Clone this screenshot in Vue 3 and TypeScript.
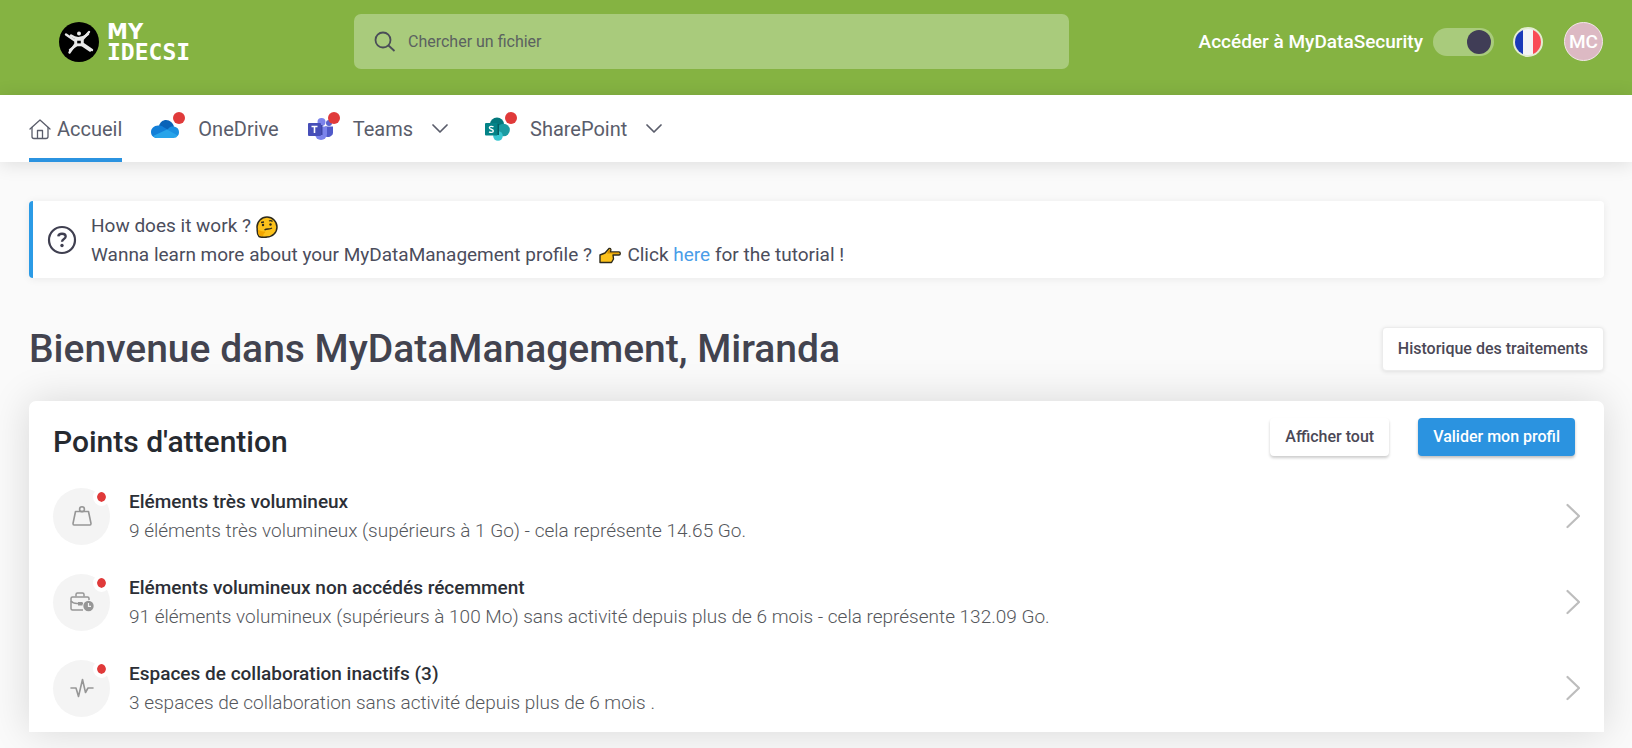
<script setup lang="ts">
import { ref } from 'vue'

interface Attention {
  icon: 'weight' | 'briefcase' | 'pulse'
  title: string
  text: string
}

const search = ref('')
const security = ref(true)

const points: Attention[] = [
  {
    icon: 'weight',
    title: 'Eléments très volumineux',
    text: '9 éléments très volumineux (supérieurs à 1 Go) - cela représente 14.65 Go.',
  },
  {
    icon: 'briefcase',
    title: 'Eléments volumineux non accédés récemment',
    text: '91 éléments volumineux (supérieurs à 100 Mo) sans activité depuis plus de 6 mois - cela représente 132.09 Go.',
  },
  {
    icon: 'pulse',
    title: 'Espaces de collaboration inactifs (3)',
    text: '3 espaces de collaboration sans activité depuis plus de 6 mois .',
  },
]
</script>

<template>
  <div class="page">
    <header class="topbar">
      <a class="logo" href="#">
        <svg width="42" height="42" viewBox="0 0 42 42" aria-hidden="true">
          <circle cx="21" cy="21" r="20" fill="#000" />
          <g fill="none" stroke="#e8e8e8" stroke-width="2.4" stroke-linecap="round" stroke-linejoin="round">
            <path d="M8 13.500 L17.500 20 V23 L11.500 31.500" />
            <path d="M31 11 L24.500 18.500 V22.500 L34 29" />
            <path d="M13 14.500 Q21 20.500 30 13" />
            <path d="M12 29 L19 23.800 H23.500 L32 29.500" />
            <path d="M18 18.500 H24 V24 H18 Z" />
          </g>
          <circle cx="21" cy="12.500" r="2" fill="#e8e8e8" />
        </svg>
        <span class="brand"><span class="brand-my">MY</span><span class="brand-name">IDECSI</span></span>
      </a>

      <div class="search">
        <label for="search" class="search-icon">
          <svg width="22" height="22" viewBox="0 0 22 22" role="img" aria-label="Rechercher">
            <circle cx="9" cy="9" r="7.5" fill="none" stroke="#4a4d58" stroke-width="1.8" />
            <path d="M14.5 14.5 L20.5 20" stroke="#4a4d58" stroke-width="1.8" fill="none" />
          </svg>
        </label>
        <input id="search" v-model="search" type="text" placeholder="Chercher un fichier" />
      </div>

      <div class="account">
        <label for="security">Accéder à MyDataSecurity</label>
        <input id="security" v-model="security" class="switch" type="checkbox" role="switch" />
        <button class="round flag" type="button" aria-label="Français">
          <svg width="30" height="30" viewBox="0 0 30 30">
            <clipPath id="flag-clip"><circle cx="15" cy="15" r="13" /></clipPath>
            <circle cx="15" cy="15" r="15" fill="#e3edd2" />
            <g clip-path="url(#flag-clip)">
              <rect width="30" height="30" fill="#f3f3f5" />
              <rect width="10" height="30" fill="#1a39b8" />
              <rect x="20" width="10" height="30" fill="#f94b55" />
            </g>
          </svg>
        </button>
        <button class="round avatar" type="button">MC</button>
      </div>
    </header>

    <nav class="tabs">
      <a class="tab active" href="#">
        <svg width="22" height="22" viewBox="0 0 22 22" fill="none" stroke="#5a5d6b" stroke-width="1.3" stroke-linejoin="round" stroke-linecap="round" aria-hidden="true">
          <path d="M1 11 L11 2 L21 11" />
          <path d="M3 9.5 V18.5 Q3 20.5 5 20.5 H17 Q19 20.5 19 18.5 V9.5" />
          <path d="M8.5 20 V12.5 H13.5 V20" />
        </svg>
        <span>Accueil</span>
      </a>

      <a class="tab app" href="#">
        <span class="app-icon">
          <svg width="28" height="20" viewBox="0 0 28 20" aria-hidden="true">
            <path d="M8 7 C9 3 12 1 15 1 C19 1 22 4 23 7.500 L16 13 Z" fill="#0a63b8" />
            <path d="M7 6.500 C10 6 12 7.500 14 9 L19 12 L6 19 C2.500 19 0 16.500 0 13 C0 9.500 3 6.600 7 6.500 Z" fill="#127fd8" />
            <path d="M17 10 C19 7.500 21 7.200 23 7.500 C26 8 28 10 28 13 C28 15 27.500 16 26.500 17 L15 12 Z" fill="#1a8fe0" />
            <path d="M2 17 L16 10.500 L26.800 16.500 C26 18.200 24.500 19 22.500 19 H6 C4.500 19 3 18.300 2 17 Z" fill="#28a4ea" />
          </svg>
          <i class="alert-dot"></i>
        </span>
        <span>OneDrive</span>
      </a>

      <button class="tab app" type="button">
        <span class="app-icon">
          <svg width="26" height="24" viewBox="0 0 26 24" aria-hidden="true">
            <circle cx="21" cy="6" r="3" fill="#5a62cc" />
            <circle cx="13.500" cy="5" r="4" fill="#7b83eb" />
            <path d="M17 9.500 H25 V16 A5 5 0 0 1 17 19 Z" fill="#5059c9" />
            <path d="M7 9.500 H19 V17 A6 6 0 0 1 7 17 Z" fill="#7b83eb" />
            <path d="M8 8 H14.500 V18 H8 Z" fill="#3e46a8" />
            <rect x="0" y="6" width="13" height="13" rx="1" fill="#464eb8" />
            <path d="M3.500 9.500 H9.500 M6.500 9.500 V16" stroke="#fff" stroke-width="1.600" />
          </svg>
          <i class="alert-dot"></i>
        </span>
        <span>Teams</span>
        <svg class="caret" width="16" height="10" viewBox="0 0 16 10" aria-hidden="true">
          <path d="M1 1 L8 8 L15 1" fill="none" stroke="#5a5d6b" stroke-width="1.700" stroke-linecap="round" stroke-linejoin="round" />
        </svg>
      </button>

      <button class="tab app wide" type="button">
        <span class="app-icon">
          <svg width="26" height="24" viewBox="0 0 26 24" aria-hidden="true">
            <circle cx="12" cy="7.500" r="7" fill="#03787c" />
            <circle cx="18.500" cy="13" r="6.300" fill="#1a9ba1" />
            <circle cx="13" cy="19" r="4.800" fill="#37c6d0" />
            <path d="M2 7 H14 V18 H6 Z" fill="#045d61" />
            <rect x="0" y="6" width="12.500" height="12.500" rx="1" fill="#038387" />
            <path d="M8.500 9.900 C7 9 4.300 9.200 4.400 10.800 C4.500 12.500 8.400 12 8.300 14 C8.200 15.700 5.500 15.700 4.100 14.800" fill="none" stroke="#fff" stroke-width="1.400" />
          </svg>
          <i class="alert-dot"></i>
        </span>
        <span>SharePoint</span>
        <svg class="caret" width="16" height="10" viewBox="0 0 16 10" aria-hidden="true">
          <path d="M1 1 L8 8 L15 1" fill="none" stroke="#5a5d6b" stroke-width="1.700" stroke-linecap="round" stroke-linejoin="round" />
        </svg>
      </button>
    </nav>

    <main class="content">
      <section class="notice">
        <svg width="30" height="30" viewBox="0 0 30 30" aria-hidden="true">
          <circle cx="15" cy="15" r="13" fill="none" stroke="#3f3f50" stroke-width="2.200" />
          <path d="M11.300 11.300 C11.600 7.800 18.700 7.900 18.700 11.500 C18.700 14.200 15 13.800 15 16.800" fill="none" stroke="#3f3f50" stroke-width="2.300" />
          <circle cx="15" cy="20.500" r="1.700" fill="#3f3f50" />
        </svg>
        <div>
          <p>
            How does it work ?
            <svg class="emoji" width="22" height="22" viewBox="0 0 22 22" role="img" aria-label="Visage pensif">
              <path d="M3 20.500 C1.500 19 1 16.500 1.200 13 L1 11 A10 10 0 1 1 11 21 C8 21.500 5 21.500 3 20.500 Z" fill="#fcc21b" stroke="#2d2a1c" stroke-width="1.500" />
              <path d="M2 14 C4 14 5 16 9 15.500 C10 16.500 8 17.500 7.500 18 C8 20 6 20.500 4 20 C2.500 19 2 17 2 14 Z" fill="#f2a600" />
              <circle cx="7" cy="9" r="1.200" fill="#2d2a1c" />
              <circle cx="14.500" cy="8.500" r="1.200" fill="#2d2a1c" />
              <path d="M5 6.500 L8 6 M13 5 Q15 4 16.500 5.500 M8.500 14 C11 12 13 14 16 12" fill="none" stroke="#2d2a1c" stroke-width="1.300" />
            </svg>
          </p>
          <p>
            Wanna learn more about your MyDataManagement profile ?
            <svg class="emoji hand" width="22" height="17" viewBox="0 0 22 17" role="img" aria-label="Main pointant à droite">
              <path d="M1 8 L6 6 L10 1.500 C12 1 12.500 3 11 5 H20 C21.700 5 21.700 8 20 8 H14 L14.500 12 L12.500 15.500 H1 Z" fill="#fcc21b" stroke="#2d2a1c" stroke-width="1.400" stroke-linejoin="round" />
              <path d="M9.500 3.500 L11.500 2.500 L10.500 5.500 H20 V6.500 H8 Z" fill="#d68f00" />
            </svg>
            Click <a href="#">here</a> for the tutorial !
          </p>
        </div>
      </section>

      <div class="headline">
        <h1>Bienvenue dans MyDataManagement, Miranda</h1>
        <button class="btn history" type="button">Historique des traitements</button>
      </div>

      <section class="card">
        <div class="card-head">
          <h2>Points d'attention</h2>
          <div class="card-actions">
            <button class="btn plain" type="button">Afficher tout</button>
            <button class="btn primary" type="button">Valider mon profil</button>
          </div>
        </div>

        <a v-for="point in points" :key="point.title" class="row" href="#">
          <span class="bubble">
            <svg v-if="point.icon === 'weight'" width="20" height="20" viewBox="0 0 20 20" fill="none" stroke="#969696" stroke-width="1.600" stroke-linejoin="round" aria-hidden="true">
              <circle cx="10" cy="3.200" r="2.400" />
              <path d="M3.500 5.500 H16.500 L19 17.500 Q19 19 18 19 H2 Q1 19 1 17.500 Z" />
            </svg>
            <svg v-else-if="point.icon === 'briefcase'" width="24" height="20" viewBox="0 0 24 20" aria-hidden="true">
              <g fill="none" stroke="#969696" stroke-width="1.500" stroke-linejoin="round">
                <path d="M6 4.500 V2.500 Q6 1 7.500 1 H12.500 Q14 1 14 2.500 V4.500" />
                <path d="M13 18 H2.500 Q1 18 1 16.500 V6.500 Q1 5 2.500 5 H17.500 Q19 5 19 6.500 V8" />
                <path d="M1 9 Q3 11.500 7 11.500 H13" />
              </g>
              <rect x="8" y="10" width="4.500" height="3.500" fill="#969696" />
              <circle cx="18.500" cy="14" r="5.200" fill="#969696" />
              <path d="M18.500 11 V14.300 H21" fill="none" stroke="#f4f4f4" stroke-width="1.200" />
            </svg>
            <svg v-else width="24" height="20" viewBox="0 0 24 20" fill="none" stroke="#969696" stroke-width="1.600" stroke-linejoin="round" stroke-linecap="round" aria-hidden="true">
              <path d="M1 10 H6 L8.500 18.500 L12.500 1.500 L15.500 14.500 L18 10 H23" />
            </svg>
            <i class="new-dot"></i>
          </span>
          <span class="row-text">
            <strong>{{ point.title }}</strong>
            <span>{{ point.text }}</span>
          </span>
          <svg class="chevron" width="14" height="26" viewBox="0 0 14 26" aria-hidden="true">
            <path d="M1.500 2 L13 13 L1.500 24" fill="none" stroke="#bdbdbd" stroke-width="2.200" stroke-linecap="round" stroke-linejoin="round" />
          </svg>
        </a>
      </section>
    </main>
  </div>
</template>

<style>
body {
  margin: 0;
  background: #fafafa;
}
</style>

<style scoped>
.page {
  font-family: Roboto, "Liberation Sans", sans-serif;
  font-size: 19px;
  color: #4b4d5c;
}

a {
  color: inherit;
  text-decoration: none;
}

button,
input {
  font-family: inherit;
  border: 0;
  margin: 0;
}

h1,
h2,
p {
  margin: 0;
}

.topbar {
  display: grid;
  grid-template-columns: 325px minmax(0, 715px) 1fr;
  align-items: center;
  padding: 14px 29px 26px;
  background: #85b342;
}

.logo {
  display: flex;
  align-items: center;
  gap: 7px;
  padding-left: 29px;
  color: #fff;
}

.brand {
  display: flex;
  flex-direction: column;
  font-size: 23px;
  font-weight: 700;
  line-height: 20px;
}

.brand-my {
  font-family: "DejaVu Sans", sans-serif;
  font-size: 21px;
}

.brand-name {
  font-family: "DejaVu Sans Mono", monospace;
}

.search {
  display: flex;
  align-items: center;
  height: 55px;
  padding: 0 20px;
  gap: 12px;
  box-sizing: border-box;
  border-radius: 7px;
  background: #a9cb7c;
}

.search-icon {
  display: flex;
}

.search input {
  flex: 1;
  min-width: 0;
  padding: 0;
  background: transparent;
  color: #4b4d5c;
  font-size: 16px;
  outline: 0;
}

.search input::placeholder {
  color: #5b6260;
  opacity: 1;
}

.account {
  display: flex;
  align-items: center;
  justify-content: flex-end;
  color: #fff;
  font-weight: 500;
  white-space: nowrap;
}

.switch {
  appearance: none;
  display: flex;
  align-items: center;
  width: 61px;
  height: 28px;
  margin-left: 10px;
  padding: 0 3px;
  box-sizing: border-box;
  border-radius: 14px;
  background: #a9cb7c;
}

.switch::before {
  content: "";
  width: 24px;
  height: 24px;
  border-radius: 50%;
  background: #403d56;
}

.switch:checked {
  justify-content: flex-end;
}

.round {
  display: flex;
  align-items: center;
  justify-content: center;
  padding: 0;
  border-radius: 50%;
  background: transparent;
}

.flag {
  margin-left: 19px;
}

.avatar {
  width: 39px;
  height: 39px;
  margin-left: 21px;
  border: 1px solid #f3e6ea;
  background: #dcb9c3;
  color: #fff;
  font-size: 19px;
  font-weight: 500;
}

.tabs {
  display: flex;
  gap: 29px;
  height: 67px;
  padding: 0 29px;
  background: #fff;
  box-shadow: 0 2px 18px rgba(0, 0, 0, 0.12);
}

.tab {
  display: flex;
  align-items: center;
  gap: 6px;
  padding: 0;
  background: transparent;
  color: #5a5d6b;
  font-size: 20px;
  border-top: 4px solid transparent;
  border-bottom: 4px solid transparent;
}

.tab.active {
  border-bottom-color: #2b93e0;
}

.tab.app {
  gap: 19px;
}

.tab.wide {
  margin-left: 8px;
}

.app-icon {
  position: relative;
  display: flex;
}

.alert-dot {
  position: absolute;
  top: 50%;
  right: -6px;
  width: 12px;
  height: 12px;
  margin-top: -17px;
  border-radius: 50%;
  background: #e03a3a;
}

.content {
  padding: 39px 28px 17px 29px;
}

.notice {
  display: flex;
  align-items: center;
  gap: 14px;
  padding: 10px 14px 9px;
  border-left: 4px solid #2b9be6;
  border-radius: 4px;
  background: #fff;
  box-shadow: 0 1px 8px rgba(0, 0, 0, 0.07);
  line-height: 29px;
}

.notice a {
  color: #4a9de8;
}

.emoji {
  vertical-align: middle;
}

.hand {
  margin: 0 2px;
}

.headline {
  display: flex;
  align-items: center;
  justify-content: space-between;
  margin: 49px 0 30px;
}

h1 {
  color: #42434f;
  font-size: 39px;
  font-weight: 500;
  line-height: 44px;
}

.btn {
  height: 38px;
  padding: 0 15px 2px;
  border-radius: 4px;
  background: #fff;
  color: #4b4856;
  font-size: 16px;
  font-weight: 500;
  white-space: nowrap;
}

.history {
  height: 44px;
  border: 1px solid #ececec;
  box-shadow: 0 1px 4px rgba(0, 0, 0, 0.1);
}

.plain {
  box-shadow: 0 2px 3px rgba(0, 0, 0, 0.2);
}

.primary {
  background: #2b93e0;
  color: #fff;
  box-shadow: 0 2px 3px rgba(0, 0, 0, 0.25);
}

.card {
  padding: 17px 24px 1px;
  border-radius: 7px 7px 0 0;
  background: #fff;
  box-shadow: 0 0 40px rgba(0, 0, 0, 0.14);
}

.card-head {
  display: flex;
  align-items: flex-start;
  justify-content: space-between;
  padding-right: 5px;
  margin-bottom: 7px;
}

.card-actions {
  display: flex;
  gap: 29px;
}

h2 {
  color: #262a30;
  font-size: 30px;
  font-weight: 500;
  line-height: 48px;
}

.row {
  display: flex;
  align-items: center;
  gap: 19px;
  height: 86px;
}

.bubble {
  position: relative;
  display: flex;
  align-items: center;
  justify-content: center;
  width: 57px;
  height: 57px;
  flex: none;
  border-radius: 50%;
  background: #f4f4f4;
}

.new-dot {
  position: absolute;
  top: 0;
  right: 0;
  width: 9px;
  height: 10px;
  border: 4px solid #fff;
  border-radius: 50%;
  background: #e03a3a;
  background-clip: padding-box;
}

.row-text {
  display: flex;
  flex: 1;
  flex-direction: column;
  line-height: 29px;
  font-weight: 300;
  color: #55575c;
}

.row-text strong {
  color: #2c2f36;
  font-weight: 500;
}
</style>
